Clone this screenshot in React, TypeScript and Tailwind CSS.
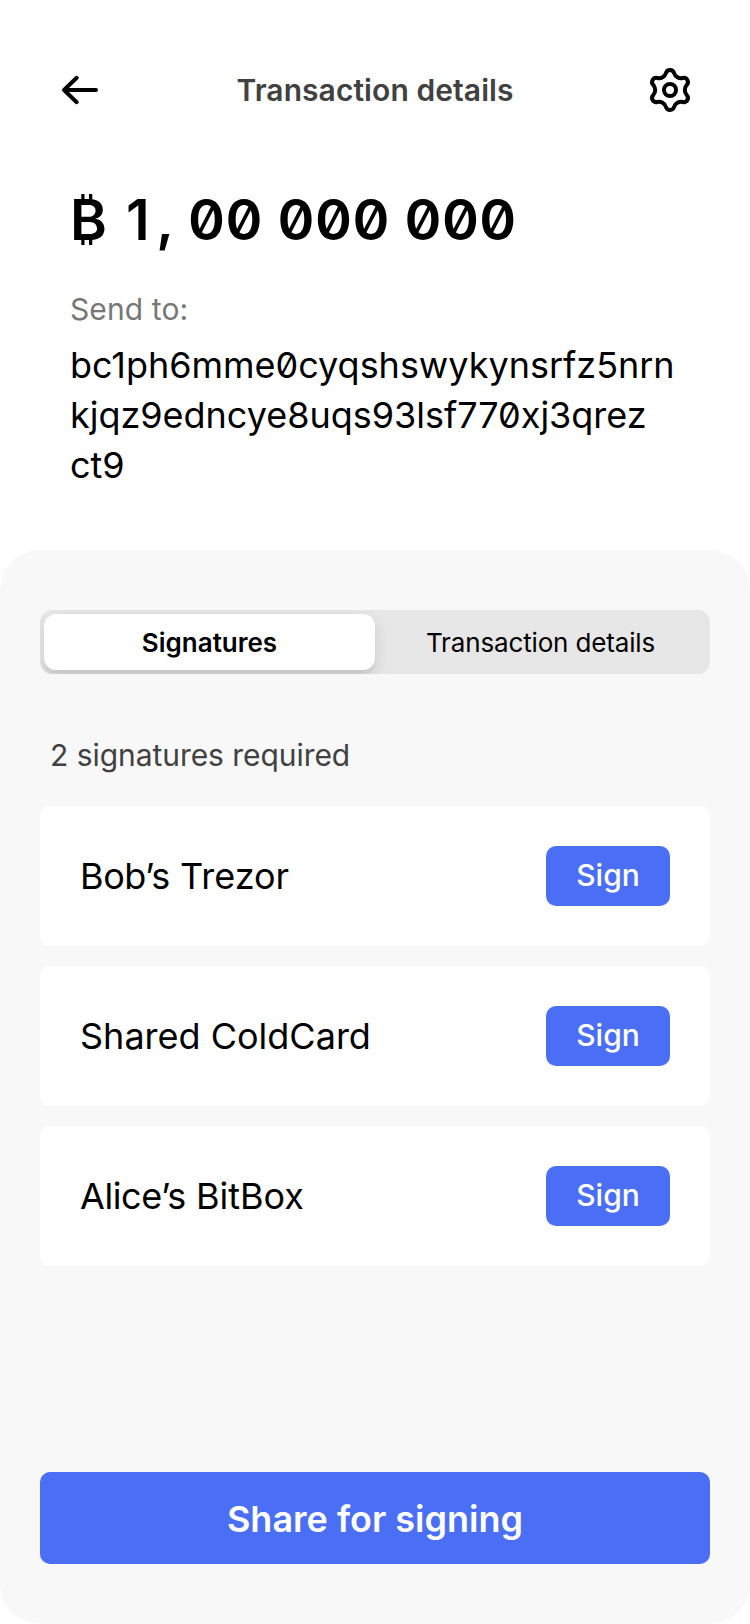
const signers = ["Bob’s Trezor", "Shared ColdCard", "Alice’s BitBox"];

function SignerName({ name }: { name: string }) {
  const [owner, device] = name.split(" ");
  return (
    <span className="text-[36px]">
      <span className={owner.includes("’") ? "tracking-[-0.4px]" : "tracking-normal"}>{owner}</span> {device}
    </span>
  );
}

export default function App() {
  return (
    <div className="flex h-[1624px] w-[750px] flex-col overflow-hidden bg-white font-['Inter',sans-serif] text-black">
      <header className="flex h-[180px] items-center justify-between px-[60px]">
        <svg width="40" height="40" viewBox="0 0 40 40" fill="none" stroke="#000" strokeWidth="4" strokeLinecap="round" strokeLinejoin="round">
          <path d="M36 20H4M16.7 7.8L4 20L16.7 32.2" />
        </svg>
        <h1 className="text-[30px] font-semibold tracking-[0.07px] text-[#414141]">Transaction details</h1>
        <svg className="overflow-visible" width="40" height="44" viewBox="-20 -22 40 44" fill="none" stroke="#000" strokeWidth="4">
          <circle r="6" />
          <path d="M-4.02 -17.03A4.2 4.2 0 0 1 4.02 -17.03A7.4 7.4 0 0 0 12.74 -12A4.2 4.2 0 0 1 16.76 -5.03A7.4 7.4 0 0 0 16.76 5.03A4.2 4.2 0 0 1 12.74 12A7.4 7.4 0 0 0 4.02 17.03A4.2 4.2 0 0 1 -4.02 17.03A7.4 7.4 0 0 0 -12.74 12A4.2 4.2 0 0 1 -16.76 5.03A7.4 7.4 0 0 0 -16.76 -5.03A4.2 4.2 0 0 1 -12.74 -12A7.4 7.4 0 0 0 -4.02 -17.03Z" />
        </svg>
      </header>
      <section className="h-[370px] px-[70px]">
        <p className="mt-[4px] whitespace-pre text-[56px] leading-[72px] font-semibold tracking-[0.5px] [font-feature-settings:'zero']">₿ <span className="mr-[6px] ml-[4px]">1</span>, 00 000 000</p>
        <p className="mt-[33px] text-[30px] leading-[40px] tracking-[0.1px] text-[#777]">Send to:</p>
        <p className="mt-[11px] text-[36px] leading-[50px] tracking-[-0.02px] [font-feature-settings:'zero']">bc1ph6mme0cyqshswykynsrfz5nrn<br />kjqz9edncye8uqs93lsf770xj3qrez<br />ct9</p>
      </section>
      <main className="flex flex-1 flex-col rounded-[40px] bg-[#f8f8f8] px-[40px] pt-[60px] pb-[60px]">
        <div className="grid h-[64px] grid-cols-2 overflow-hidden rounded-[12px] bg-[#e7e7e7] p-[4px]">
          <button className="rounded-[12px] bg-white text-[26px] font-semibold shadow-[0_6px_16px_rgba(0,0,0,0.12),0_6px_2px_rgba(0,0,0,0.04)]">Signatures</button>
          <button className="text-[26px] tracking-[-0.15px]">Transaction details</button>
        </div>
        <p className="mt-[61px] ml-[10px] text-[30px] leading-[40px] tracking-[-0.05px] text-[#414141]">2 signatures required</p>
        <div className="mt-[31px] flex flex-col gap-[20px]">
          {signers.map((name) => (
            <div key={name} className="flex h-[140px] items-center justify-between rounded-[10px] bg-white px-[40px]">
              <SignerName name={name} />
              <button className="h-[60px] w-[124px] rounded-[10px] bg-[#4a6ff5] pb-[2px] text-[30px] font-medium text-white">Sign</button>
            </div>
          ))}
        </div>
        <button className="mt-auto h-[92px] rounded-[10px] bg-[#4a6ff5] pt-[2px] text-[36px] font-semibold text-white">Share for signing</button>
      </main>
    </div>
  );
}
